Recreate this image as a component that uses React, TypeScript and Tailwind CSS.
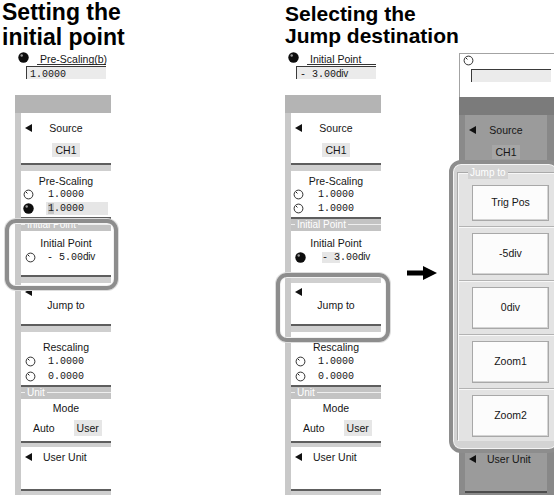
import React from 'react';

type V = 'left' | 'mid' | 'right';

function Tri() {
  return (
    <svg width="7" height="8" viewBox="0 0 7 8" className="shrink-0 block">
      <polygon points="0,4 7,0 7,8" fill="#111" />
    </svg>
  );
}

function Knob({ filled }: { filled?: boolean }) {
  return filled ? (
    <svg width="11" height="11" viewBox="0 0 11 11" className="shrink-0 block">
      <circle cx="5.5" cy="5.5" r="5.2" fill="#0d0d0d" />
      <circle cx="3.7" cy="3.5" r="1.2" fill="#9a9a9a" />
    </svg>
  ) : (
    <svg width="11" height="11" viewBox="0 0 11 11" className="shrink-0 block">
      <circle cx="5.5" cy="5.5" r="4.4" fill="#fff" stroke="#1a1a1a" strokeWidth="0.9" />
      <path d="M3 3 L4.4 4.4" stroke="#1a1a1a" strokeWidth="1" />
    </svg>
  );
}

const MONO = "font-['Liberation_Mono',monospace] text-[10px]";

function GroupHeader({ label, bg, show }: { label: string; bg: string; show: boolean }) {
  return (
    <div className={`h-[12px] ${bg} flex items-start`}>
      <div className="w-[4px] h-px bg-[#eeeeee] mt-[5px]" />
      {show && <span className="text-[10px] leading-[11px] text-white px-[2px] whitespace-nowrap">{label}</span>}
      <div className="flex-1 h-px bg-[#eeeeee] mt-[5px]" />
    </div>
  );
}

function Panel({ v }: { v: V }) {
  const dim = v === 'right';
  const show = !dim;
  const box = dim ? 'bg-[#9b9b9b]' : 'bg-white';
  const gap = dim ? 'bg-[#8a8a8a]' : 'bg-[#cfcfcf]';
  const line = dim ? 'border-[#4d4d4d]' : 'border-[#5e5e5e]';
  const hdr = dim ? 'bg-[#8a8a8a]' : 'bg-[#c3c3c3]';
  const hl = dim ? 'bg-[#a6a6a6]' : 'bg-[#e6e6e6]';
  const band = dim ? 'bg-[#7b7b7b]' : 'bg-[#b4b4b4]';
  const strip = dim ? 'bg-[#8a8a8a]' : 'bg-[#c9c9c9]';

  return (
    <div className="flex flex-col w-full text-[10.5px] text-[#161616]">
      {/* top region */}
      <div className={`h-[44px] bg-white flex flex-col ${dim ? 'border-t border-l border-[#a3a3a3]' : ''}`}>
        <div className="flex items-start h-[14px]">
          <div className="ml-[3px] mt-[1px]">
            <Knob filled={!dim} />
          </div>
          {v === 'left' && (
            <div className="ml-[8px] mt-[3px] w-[69px] h-[11px] border-b border-[#333] pl-[3px] leading-[10px] whitespace-nowrap">
              Pre-Scaling(b)
            </div>
          )}
          {v === 'mid' && (
            <div className="ml-[8px] mt-[3px] w-[69px] h-[11px] border-b border-[#333] pl-[3px] leading-[10px] whitespace-nowrap">
              Initial Point
            </div>
          )}
        </div>
        <div className="ml-[11px] mt-[1px] w-[80px] h-[13px] border-t border-l border-[#3a3a3a] bg-[#ebebeb] pl-[3px] leading-[12px] whitespace-nowrap">
          {v === 'left' && <span className={MONO}>1.0000</span>}
          {v === 'mid' && (
            <span>
              <span className={MONO}>- 3.00</span>
              <span className="tracking-[-0.3px] text-[10px]">div</span>
            </span>
          )}
        </div>
      </div>
      {/* gray band */}
      <div className={`h-[18px] ${band}`} />
      {/* body */}
      <div className={`flex ${strip}`}>
        <div className={`w-[6px] shrink-0 ${strip}`} />
        <div className={`flex-1 flex flex-col ${dim ? 'pr-[7px] bg-[#888888]' : 'bg-[#cfcfcf]'}`}>
          {/* Source */}
          <div className={`h-[52px] ${box} border-b-2 ${line} flex flex-col`}>
            <div className="flex items-center h-[14px] mt-[8px]">
              <div className="ml-[4px]"><Tri /></div>
              <div className="flex-1 text-center leading-[14px]">Source</div>
              <div className="w-[11px]" />
            </div>
            <div className="self-center mt-[8px] leading-[14px]">
              <span className={`${hl} px-[3px] inline-block`}>CH1</span>
            </div>
          </div>
          <div className={`h-[6px] ${gap}`} />
          {/* Pre-Scaling */}
          <div className={`h-[48px] ${box} border-b-2 ${line} flex flex-col`}>
            {show && (
              <>
                <div className="text-center leading-[14px] mt-[3px]">Pre-Scaling</div>
                <div className="flex items-center h-[13px]">
                  <div className="ml-[2px]"><Knob /></div>
                  <span className={`ml-[14px] ${MONO} leading-[13px]`}>1.0000</span>
                </div>
                <div className="flex items-center h-[13px] mt-[1px]">
                  <div className="ml-[2px]"><Knob filled={v === 'left'} /></div>
                  {v === 'left' ? (
                    <span className={`ml-[12px] pl-[2px] flex-1 mr-[3px] ${hl} ${MONO} leading-[13px]`}>
                      <span className="bg-[#c6c6c6]">1</span>.0000
                    </span>
                  ) : (
                    <span className={`ml-[14px] ${MONO} leading-[13px]`}>1.0000</span>
                  )}
                </div>
              </>
            )}
          </div>
          <GroupHeader label="Initial Point" bg={hdr} show={show} />
          {/* Initial Point */}
          <div className={`h-[46px] ${box} border-b-2 ${line} flex flex-col`}>
            {show && (
              <>
                <div className="text-center leading-[14px] mt-[5px]">Initial Point</div>
                <div className="flex items-center h-[14px]">
                  <div className="ml-[4px]"><Knob filled={v === 'mid'} /></div>
                  {v === 'mid' ? (
                    <span className="ml-[16px] whitespace-nowrap leading-[14px]">
                      <span className={`${MONO} ${hl}`}>- 3</span>
                      <span className={MONO}>.00</span>
                      <span className="tracking-[-0.3px] text-[10px]">div</span>
                    </span>
                  ) : (
                    <span className="ml-[11px] whitespace-nowrap leading-[14px]">
                      <span className={MONO}>- 5.00</span>
                      <span className="tracking-[-0.3px] text-[10px]">div</span>
                    </span>
                  )}
                </div>
              </>
            )}
          </div>
          <div className={`h-[6px] ${gap}`} />
          {/* Jump to */}
          <div className={`h-[43px] ${box} border-b-2 ${line} flex flex-col`}>
            {show && (
              <>
                <div className="ml-[4px] mt-[5px]"><Tri /></div>
                <div className="text-center leading-[14px] mt-[2px]">Jump to</div>
              </>
            )}
          </div>
          <div className={`h-[6px] ${gap}`} />
          {/* Rescaling */}
          <div className={`h-[55px] ${box} border-b-2 ${line} flex flex-col`}>
            {show && (
              <>
                <div className="text-center leading-[14px] mt-[8px]">Rescaling</div>
                <div className="flex items-center h-[15px]">
                  <div className="ml-[4px]"><Knob /></div>
                  <span className={`ml-[12px] ${MONO} leading-[15px]`}>1.0000</span>
                </div>
                <div className="flex items-center h-[15px]">
                  <div className="ml-[4px]"><Knob /></div>
                  <span className={`ml-[12px] ${MONO} leading-[15px]`}>0.0000</span>
                </div>
              </>
            )}
          </div>
          <GroupHeader label="Unit" bg={hdr} show={show} />
          {/* Mode */}
          <div className={`h-[44px] ${box} border-b-2 ${line} flex flex-col`}>
            {show && (
              <>
                <div className="text-center leading-[14px] mt-[2px]">Mode</div>
                <div className="flex items-center mt-[5px] h-[16px] pl-[12px]">
                  <span className="leading-[16px]">Auto</span>
                  <span className={`ml-[19px] ${hl} px-[3px] leading-[16px]`}>User</span>
                </div>
              </>
            )}
          </div>
          <div className={`h-[4px] ${gap}`} />
          {/* User Unit */}
          <div className={`h-[44px] ${box} border-b-2 ${line} flex flex-col`}>
            <div className="flex items-center h-[14px] mt-[3px]">
              <div className="ml-[4px]"><Tri /></div>
              <span className="ml-[11px] leading-[14px] whitespace-nowrap">User Unit</span>
            </div>
          </div>
          <div className={`h-[4px] ${gap}`} />
        </div>
      </div>
    </div>
  );
}

function JumpButton({ label, h }: { label: string; h: string }) {
  return (
    <div className={`${h} w-[77px] bg-[#fcfcfc] border border-[#a8a8a8] shadow-[inset_-1px_-1px_0_#d4d4d4] flex items-center justify-center text-[10.5px] text-[#161616]`}>
      {label}
    </div>
  );
}

function Sep() {
  return (
    <div className="h-[12px] flex items-center -ml-[13px]">
      <div className="w-full h-[2px] border-t border-[#b3b3b3] border-b border-b-[#f8f8f8]" />
    </div>
  );
}

export default function App() {
  return (
    <div className="relative w-[554px] h-[495px] overflow-hidden bg-white flex font-['Liberation_Sans',Arial,sans-serif]">
      {/* column A */}
      <div className="w-[285px] shrink-0 flex flex-col">
        <div className="h-[53px] pl-[2px] text-[23px] leading-[25px] font-bold text-black whitespace-nowrap">
          Setting the
          <br />
          initial point
        </div>
        <div className="ml-[15px] w-[96px]">
          <Panel v="left" />
        </div>
      </div>
      {/* column B */}
      <div className="w-[96px] shrink-0 flex flex-col">
        <div className="h-[53px] pt-[3px] text-[21px] leading-[22px] font-bold text-black whitespace-nowrap">
          Selecting the
          <br />
          Jump destination
        </div>
        <Panel v="mid" />
      </div>
      {/* column C: arrow */}
      <div className="w-[78px] shrink-0 pt-[266px] pl-[26px]">
        <svg width="30" height="14" viewBox="0 0 30 14" className="block">
          <rect x="0" y="4.5" width="18" height="5" fill="#000" />
          <polygon points="16,0 30,7 16,14" fill="#000" />
        </svg>
      </div>
      {/* column D */}
      <div className="w-[95px] shrink-0 pt-[53px]">
        <Panel v="right" />
      </div>

      {/* highlights */}
      <div className="absolute left-[5px] top-[219px] w-[113px] h-[71px] rounded-[11px] border-[4px] border-[#8d8d8d] shadow-[inset_0_0_0_1px_#f2f2f2,0_0_0_1px_#dddddd]" />
      <div className="absolute left-[276px] top-[273px] w-[114px] h-[69px] rounded-[11px] border-[4px] border-[#8d8d8d] shadow-[inset_0_0_0_1px_#f2f2f2,0_0_0_1px_#dddddd]" />

      {/* Jump to popup */}
      <div className="absolute left-[449px] top-[160px] w-[112px] h-[293px] rounded-[12px] border-[4px] border-[#8d8d8d] bg-[#d3d3d3] shadow-[inset_0_0_0_1px_#f4f4f4] overflow-hidden">
        <div className="relative ml-[5px] mt-[9px] h-[268px] border-t border-l border-[#f7f7f7] shadow-[-1px_-1px_0_#a9a9a9] bg-[#e3e3e3] pl-[13px] pt-[11px]">
          <div className="absolute -top-[7px] left-[9px] px-[2px] bg-[#d3d3d3] text-white text-[10px] leading-[12px]">
            Jump to
          </div>
          <JumpButton label="Trig Pos" h="h-[36px]" />
          <Sep />
          <JumpButton label="-5div" h="h-[42px]" />
          <Sep />
          <JumpButton label="0div" h="h-[42px]" />
          <Sep />
          <JumpButton label="Zoom1" h="h-[42px]" />
          <Sep />
          <JumpButton label="Zoom2" h="h-[42px]" />
        </div>
      </div>
    </div>
  );
}
